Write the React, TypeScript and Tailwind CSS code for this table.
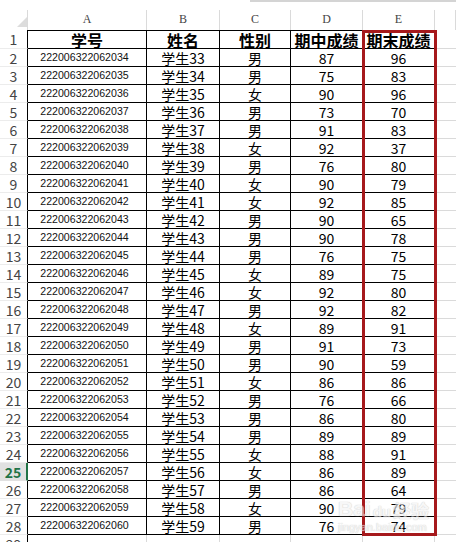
import React from "react";

const rows: [string, string, string, string, string][] = [
  ["222006322062034", "学生33", "男", "87", "96"],
  ["222006322062035", "学生34", "男", "75", "83"],
  ["222006322062036", "学生35", "女", "90", "96"],
  ["222006322062037", "学生36", "男", "73", "70"],
  ["222006322062038", "学生37", "男", "91", "83"],
  ["222006322062039", "学生38", "女", "92", "37"],
  ["222006322062040", "学生39", "男", "76", "80"],
  ["222006322062041", "学生40", "女", "90", "79"],
  ["222006322062042", "学生41", "女", "92", "85"],
  ["222006322062043", "学生42", "男", "90", "65"],
  ["222006322062044", "学生43", "男", "90", "78"],
  ["222006322062045", "学生44", "男", "76", "75"],
  ["222006322062046", "学生45", "女", "89", "75"],
  ["222006322062047", "学生46", "女", "92", "80"],
  ["222006322062048", "学生47", "男", "92", "82"],
  ["222006322062049", "学生48", "女", "89", "91"],
  ["222006322062050", "学生49", "男", "91", "73"],
  ["222006322062051", "学生50", "男", "90", "59"],
  ["222006322062052", "学生51", "女", "86", "86"],
  ["222006322062053", "学生52", "男", "76", "66"],
  ["222006322062054", "学生53", "男", "86", "80"],
  ["222006322062055", "学生54", "男", "89", "89"],
  ["222006322062056", "学生55", "女", "88", "91"],
  ["222006322062057", "学生56", "女", "86", "89"],
  ["222006322062058", "学生57", "男", "86", "64"],
  ["222006322062059", "学生58", "女", "90", "79"],
  ["222006322062060", "学生59", "男", "76", "74"],
];

const grid = "grid grid-cols-[28px_119px_73px_71px_72px_72px_1fr]";
const cjk = "font-['Noto_Sans_CJK_SC',sans-serif]";

function RowHead({ n, active }: { n: number; active?: boolean }) {
  return (
    <div
      className={
        "flex items-center justify-center border-b border-r h-full " +
        cjk +
        " text-[14px] leading-none " +
        (active
          ? "bg-[#e1e1e1] text-[#217346] font-bold border-r-2 border-r-[#217346] border-b-[#e1e1e1]"
          : "text-[#444] border-b-[#ececec] border-r-black")
      }
    >
      {n}
    </div>
  );
}

export default function App() {
  return (
    <div className="w-[456px] h-[542px] bg-white overflow-hidden relative">
      {/* top strip */}
      <div className="flex h-[10px]">
        <div className="w-[250px]" />
        <div className="flex-1 h-[2px] bg-[#d4d4d4]" />
      </div>

      <div className="relative">
        {/* column header row */}
        <div className={grid + " h-[20px] font-['Liberation_Serif',serif] text-[12px] text-[#444]"}>
          <div className="relative border-r border-[#dadada]">
            <svg className="absolute left-[17px] top-[7px]" width="10" height="10" viewBox="0 0 10 10">
              <polygon points="10,0 10,10 0,10" fill="#dcdcdc" />
            </svg>
          </div>
          {["A", "B", "C", "D", "E", ""].map((c, i) => (
            <div key={i} className="flex items-end justify-center pb-[2px] border-r border-[#dadada]">
              {c}
            </div>
          ))}
        </div>

        {/* header row 1 */}
        <div className={grid + " h-[19px]"}>
          <RowHead n={1} />
          {["学号", "姓名", "性别", "期中成绩", "期末成绩"].map((h, i) => (
            <div
              key={i}
              className={
                "flex items-center justify-center border-t border-b border-r border-black font-bold text-[16px] leading-none text-black " +
                cjk
              }
            >
              {h}
            </div>
          ))}
          <div className="border-b border-[#dadada]" />
        </div>

        {rows.map((r, idx) => {
          const n = idx + 2;
          return (
            <div key={n} className={grid + " h-[18px]"}>
              <RowHead n={n} active={n === 25} />
              <div className="flex items-center justify-center border-b border-r border-black font-['Liberation_Sans',Arial,sans-serif] text-[10.6px] leading-none text-[#111] pr-[5px]">
                {r[0]}
              </div>
              <div className={"flex items-center justify-center border-b border-r border-black text-[14px] leading-none text-black " + cjk}>
                {r[1]}
              </div>
              <div className={"flex items-center justify-center border-b border-r border-black text-[14px] leading-none text-black " + cjk}>
                {r[2]}
              </div>
              <div className={"flex items-center justify-center border-b border-r border-black text-[14px] leading-none text-black " + cjk}>
                {r[3]}
              </div>
              <div className={"flex items-center justify-center border-b border-r border-black text-[14px] leading-none text-black " + cjk}>
                {r[4]}
              </div>
              <div className="border-b border-[#dadada]" />
            </div>
          );
        })}

        {/* row 29 partial */}
        <div className={grid + " h-[18px]"}>
          <RowHead n={29} />
          <div className="border-r border-[#dadada]" />
          <div className="border-r border-[#dadada]" />
          <div className="border-r border-[#dadada]" />
          <div className="border-r border-[#dadada]" />
          <div className="border-r border-[#dadada]" />
          <div />
        </div>

        {/* red highlight box around column E */}
        <div className="absolute left-[362px] top-[20px] w-[75px] h-[506px] border-[3px] border-[#a6191c] pointer-events-none" />

        {/* watermark */}
        <div className="absolute left-[338px] top-[488px] pointer-events-none flex flex-col items-start opacity-60">
          <div className="flex items-end font-['Liberation_Sans',sans-serif] text-[21px] font-bold leading-none text-[#f2f2f2] [text-shadow:0_0_1px_#bdbdbd,0_0_1px_#bdbdbd]">
            <span>Bai</span>
            <span className="text-[15px] mx-[2px]">du</span>
            <span className={cjk + " text-[18px]"}>经验</span>
          </div>
          <div className="font-['Liberation_Sans',sans-serif] text-[11px] leading-none mt-[3px] text-[#f2f2f2] [text-shadow:0_0_1px_#bdbdbd,0_0_1px_#bdbdbd]">
            jingyan.baidu.com
          </div>
        </div>
      </div>
    </div>
  );
}
